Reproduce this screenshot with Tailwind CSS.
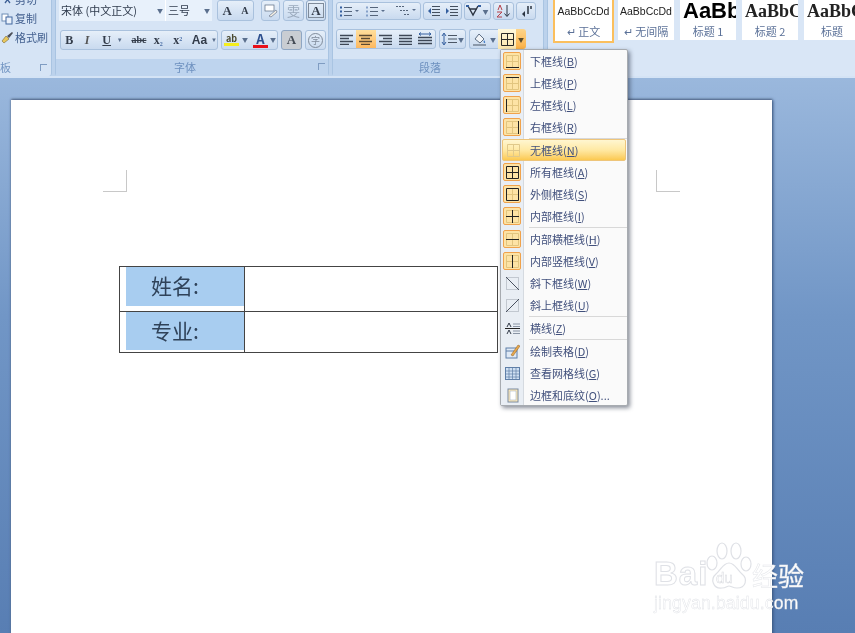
<!DOCTYPE html>
<html lang="zh-CN">
<head>
    <meta charset="UTF-8">
    <title>Word 边框菜单</title>
    <script src="https://cdn.jsdelivr.net/npm/@tailwindcss/browser@4"></script>
</head>
<body class="m-0 overflow-hidden bg-[#5f84b8]">
<div class="relative w-[855px] h-[633px] overflow-hidden flex flex-col bg-linear-to-b from-[#a8c3e4] via-[#7196c6] to-[#587eb3] font-['Noto_Sans_CJK_SC','Liberation_Sans',sans-serif] blur-[0.35px]">

    <!-- Ribbon -->
    <div class="h-[78px] shrink-0 flex gap-[3px] bg-[#bcd2ec] border-b-2 border-[#d4e3f5] overflow-hidden">

        <!-- Clipboard -->
        <div class="w-[52px] h-[76px] shrink-0 flex flex-col bg-[#d6e4f5] border-r border-[#a9c4e2] rounded-br-[3px]">
            <div class="h-[59px] flex flex-col text-[11px] leading-[19px] text-[#43608f]">
                <div class="flex items-center gap-[2px] -mt-[10px] h-[19px] pl-[2px]">
                    <svg class="w-[11px] h-[11px]" viewBox="0 0 11 11"><path d="M2 1l6 8M9 1L3 9" stroke="#3d5f95" stroke-width="1.3" fill="none"/></svg>
                    <span>剪切</span>
                </div>
                <div class="flex items-center gap-[1px] h-[19px] pl-[1px]">
                    <svg class="w-[13px] h-[13px]" viewBox="0 0 13 13"><rect x="1" y="2" width="6" height="7" fill="#fff" stroke="#6f8db5"/><rect x="5" y="5" width="6" height="7" fill="#eaf1fa" stroke="#41679f"/></svg>
                    <span>复制</span>
                </div>
                <div class="flex items-center gap-[1px] h-[19px] pl-[1px]">
                    <svg class="w-[13px] h-[13px]" viewBox="0 0 13 13"><path d="M1 10l4-5 3 3-5 4z" fill="#e9c75c" stroke="#7b6a35" stroke-width=".6"/><path d="M6 5l5-4 1 1-4 5z" fill="#4c4f57"/></svg>
                    <span>格式刷</span>
                </div>
            </div>
            <div class="flex-1 flex items-center justify-between pr-[4px] text-[11px] text-[#7295c2]">
                <span>板</span>
                <span class="w-[7px] h-[7px] border-t border-l border-[#7f9cc2]"></span>
            </div>
        </div>

        <!-- Font -->
        <div class="w-[274px] h-[76px] shrink-0 flex flex-col bg-[#d6e4f5] border-x border-[#a9c4e2] rounded-b-[3px]">
            <div class="h-[59px] pl-[3px]">
                <div class="flex h-[21px] items-stretch">
                    <div class="w-[107px] flex items-center justify-between px-[2px] bg-[#e8f1fb] border-r border-white text-[#2f3b4d] text-[11px]">
                        <span>宋体 (中文正文)</span><span class="text-[6px] text-[#5a6f8d]">▼</span>
                    </div>
                    <div class="w-[46px] flex items-center justify-between px-[2px] bg-[#e8f1fb] text-[#2f3b4d] text-[11px]">
                        <span>三号</span><span class="text-[6px] text-[#5a6f8d]">▼</span>
                    </div>
                    <div class="ml-[5px] w-[37px] flex items-center justify-around rounded-[3px] border border-[#a9c1dd] bg-linear-to-b from-[#e6eff9] to-[#c9daef] font-['Liberation_Serif',serif] font-bold text-[#333c4a] leading-none">
                        <span class="text-[13px]">A</span><span class="text-[10px]">A</span>
                    </div>
                    <div class="ml-[7px] w-[19px] flex items-center justify-center rounded-[3px] border border-[#a9c1dd] bg-linear-to-b from-[#e6eff9] to-[#c9daef]">
                        <svg class="w-[14px] h-[14px]" viewBox="0 0 14 14"><rect x="1" y="1" width="9" height="6" fill="#fff" stroke="#5a6a80" stroke-width=".7"/><path d="M5 12l7-6 1 2-6 5z" fill="#f5f0e4" stroke="#6b7a90" stroke-width=".7"/></svg>
                    </div>
                    <div class="ml-[3px] w-[21px] flex items-center justify-center rounded-[3px] border border-[#a9c1dd] bg-linear-to-b from-[#e6eff9] to-[#c9daef] text-[13px] leading-none text-[#9aa9bc]">雯</div>
                    <div class="ml-[2px] w-[20px] flex items-center justify-center rounded-[3px] border border-[#8ea6c3] bg-linear-to-b from-[#e6eff9] to-[#c9daef] font-['Liberation_Serif',serif] font-bold text-[13px] leading-none text-[#333c4a]">
                        <span class="border border-[#7f8b9a] px-[2px]">A</span>
                    </div>
                </div>
                <div class="flex h-[20px] mt-[9px] items-stretch">
                    <div class="w-[158px] ml-[1px] flex items-center rounded-[3px] border border-[#a9c1dd] bg-linear-to-b from-[#e6eff9] to-[#c9daef] font-['Liberation_Serif',serif] text-[#333c4a] leading-none">
                        <span class="w-[17px] text-center text-[12px] font-bold">B</span>
                        <span class="w-[20px] text-center text-[12px] italic font-bold text-[#555]">I</span>
                        <span class="w-[21px] text-center text-[12px] font-bold underline">U</span>
                        <span class="w-[13px] text-[6px] text-[#5a6f8d]">▼</span>
                        <span class="w-[20px] text-center text-[10px] font-bold line-through">abc</span>
                        <span class="w-[20px] text-center text-[12px] font-bold">x<sub class="text-[6px] text-[#4a6ea5]">2</sub></span>
                        <span class="w-[21px] text-center text-[12px] font-bold">x<sup class="text-[6px] text-[#4a6ea5]">2</sup></span>
                        <span class="w-[24px] text-center text-[12px] font-bold font-['Liberation_Sans',sans-serif]">Aa</span>
                        <span class="text-[6px] text-[#5a6f8d]">▼</span>
                    </div>
                    <div class="ml-[3px] w-[57px] flex items-center rounded-[3px] border border-[#a9c1dd] bg-linear-to-b from-[#e6eff9] to-[#c9daef] leading-none">
                        <span class="ml-[2px] w-[15px] flex flex-col items-center text-[9px] font-bold text-[#4a4a30] border-b-[3px] border-[#f5ee1e]">ab</span>
                        <span class="ml-[3px] w-[9px] text-[6px] text-[#5a6f8d]">▼</span>
                        <span class="ml-[2px] w-[15px] flex justify-center text-[13px] font-bold text-[#2d4f8e] border-b-[3px] border-[#e8101a]">A</span>
                        <span class="ml-[2px] text-[6px] text-[#5a6f8d]">▼</span>
                    </div>
                    <div class="ml-[3px] w-[21px] flex items-center justify-center rounded-[3px] border border-[#8ea6c3] bg-[#c9cdd2] font-['Liberation_Serif',serif] font-bold text-[13px] text-[#444b55]">A</div>
                    <div class="ml-[3px] w-[21px] flex items-center justify-center rounded-[3px] border border-[#a9c1dd] bg-linear-to-b from-[#e6eff9] to-[#c9daef]">
                        <span class="w-[15px] h-[15px] rounded-full border border-[#7f8b9a] text-[9px] leading-[13px] text-center text-[#7f8b9a]">字</span>
                    </div>
                </div>
            </div>
            <div class="relative flex-1 bg-[#bed4ee] text-center text-[11px] leading-[17px] text-[#6d90bf] pr-[14px]">
                字体
                <span class="absolute right-[3px] top-[4px] w-[7px] h-[7px] border-t border-l border-[#7f9cc2]"></span>
            </div>
        </div>

        <!-- Paragraph -->
        <div class="w-[212px] h-[76px] shrink-0 flex flex-col bg-[#d6e4f5] border-x border-[#a9c4e2] rounded-b-[3px]">
            <div class="h-[59px] pl-[3px] pt-[2px]">
                <div class="flex h-[18px] gap-[2px] items-stretch">
                    <div class="w-[85px] flex items-center justify-around rounded-[3px] border border-[#a9c1dd] bg-linear-to-b from-[#e6eff9] to-[#c9daef]">
                        <svg class="w-[20px] h-[11px]" viewBox="0 0 20 11"><path d="M4 1.500h8M4 5.500h8M4 9.500h8" stroke="#55657b"/><path d="M0 1.500h2M0 5.500h2M0 9.500h2" stroke="#345f9f" stroke-width="2"/><path d="M15 4h4l-2 2z" fill="#5a6f8d"/></svg>
                        <svg class="w-[20px] h-[11px]" viewBox="0 0 20 11"><path d="M4 1.500h8M4 5.500h8M4 9.500h8" stroke="#55657b"/><path d="M1 .5v2M1 4.500v2M1 8.500v2" stroke="#345f9f"/><path d="M15 4h4l-2 2z" fill="#5a6f8d"/></svg>
                        <svg class="w-[24px] h-[12px]" viewBox="0 0 24 12"><path d="M3 1.500h9M7 5.500h9M11 9.500h6" stroke="#55657b" stroke-dasharray="2 1"/><path d="M19 4h4l-2 2z" fill="#5a6f8d"/></svg>
                    </div>
                    <div class="w-[39px] flex items-center justify-around rounded-[3px] border border-[#a9c1dd] bg-linear-to-b from-[#e6eff9] to-[#c9daef]">
                        <svg class="w-[13px] h-[12px]" viewBox="0 0 13 12"><path d="M5 1.500h8M5 4.500h8M5 7.500h8M5 10.500h8" stroke="#44505f"/><path d="M4 3L1 6l3 3z" fill="#345f9f"/></svg>
                        <svg class="w-[13px] h-[12px]" viewBox="0 0 13 12"><path d="M5 1.500h8M5 4.500h8M5 7.500h8M5 10.500h8" stroke="#44505f"/><path d="M1 3l3 3-3 3z" fill="#345f9f"/></svg>
                    </div>
                    <div class="w-[27px] flex items-center justify-center gap-[1px] rounded-[3px] border border-[#a9c1dd] bg-linear-to-b from-[#e6eff9] to-[#c9daef]">
                        <svg class="w-[15px] h-[12px]" viewBox="0 0 15 12"><path d="M2 1l5 9 5-9M4 4h7" stroke="#2b3442" stroke-width="1.400" fill="none"/><path d="M0 1h3M12 1h3" stroke="#345f9f" stroke-width="2"/></svg>
                        <span class="text-[6px] text-[#5a6f8d]">▼</span>
                    </div>
                    <div class="w-[21px] flex items-center justify-center rounded-[3px] border border-[#a9c1dd] bg-linear-to-b from-[#e6eff9] to-[#c9daef]">
                        <svg class="w-[15px] h-[14px]" viewBox="0 0 15 14"><path d="M11 1v11M8.500 9.500L11 12.500l2.500-3" stroke="#2b3442" fill="none"/><path d="M2 6l2-5 2 5M1 8h5L1 13h5" stroke="#b6414a" fill="none"/></svg>
                    </div>
                    <div class="w-[20px] flex items-center justify-center rounded-[3px] border border-[#a9c1dd] bg-linear-to-b from-[#e6eff9] to-[#c9daef]">
                        <svg class="w-[11px] h-[13px]" viewBox="0 0 11 13"><path d="M7 1v8M10 1v3" stroke="#2b3442" stroke-width="1.500"/><path d="M1 9l3-3v6z" fill="#2b3442"/></svg>
                    </div>
                </div>
                <div class="flex h-[20px] mt-[9px] items-stretch">
                    <div class="w-[100px] flex items-center rounded-[3px] border border-[#a9c1dd] bg-linear-to-b from-[#e6eff9] to-[#c9daef] overflow-hidden">
                        <span class="w-[19px] flex justify-center"><svg class="w-[13px] h-[11px]" viewBox="0 0 13 11"><path d="M0 1.500h13M0 4.500h9M0 7.500h13M0 10.500h9" stroke="#3d4756" stroke-width="1.400"/></svg></span>
                        <span class="w-[20px] h-full flex items-center justify-center bg-linear-to-b from-[#ffdf9c] to-[#fdb85e]"><svg class="w-[13px] h-[11px]" viewBox="0 0 13 11"><path d="M0 1.500h13M2 4.500h9M0 7.500h13M2 10.500h9" stroke="#5b4a32" stroke-width="1.400"/></svg></span>
                        <span class="w-[20px] flex justify-center"><svg class="w-[13px] h-[11px]" viewBox="0 0 13 11"><path d="M0 1.500h13M4 4.500h9M0 7.500h13M4 10.500h9" stroke="#3d4756" stroke-width="1.400"/></svg></span>
                        <span class="w-[20px] flex justify-center"><svg class="w-[13px] h-[11px]" viewBox="0 0 13 11"><path d="M0 1.500h13M0 4.500h13M0 7.500h13M0 10.500h13" stroke="#3d4756" stroke-width="1.400"/></svg></span>
                        <span class="w-[20px] flex justify-center"><svg class="w-[14px] h-[14px]" viewBox="0 0 14 14"><path d="M0 5.500h14M0 8.500h14M0 11.500h14" stroke="#3d4756" stroke-width="1.400"/><path d="M1 2h12M1 2l2-1.500M1 2l2 1.500M13 2l-2-1.500M13 2l-2 1.500" stroke="#345f9f" fill="none"/></svg></span>
                    </div>
                    <div class="ml-[3px] w-[27px] flex items-center justify-center gap-[1px] rounded-[3px] border border-[#a9c1dd] bg-linear-to-b from-[#e6eff9] to-[#c9daef]">
                        <svg class="w-[16px] h-[14px]" viewBox="0 0 16 14"><path d="M3 2v10M1 4l2-3 2 3M1 10l2 3 2-3" stroke="#345f9f" fill="none"/><path d="M7 3.500h9M7 7h9M7 10.500h9" stroke="#4b5665"/></svg>
                        <span class="text-[6px] text-[#5a6f8d]">▼</span>
                    </div>
                    <div class="ml-[3px] w-[29px] flex items-center justify-center gap-[3px] rounded-l-[3px] border border-r-0 border-[#a9c1dd] bg-linear-to-b from-[#e6eff9] to-[#c9daef]">
                        <svg class="w-[15px] h-[15px]" viewBox="0 0 15 15"><path d="M3 7l4-5 5 5-4 4z" fill="#f1f4f8" stroke="#5f6f85"/><path d="M12 8c1 1.500 1.500 2 1 3-1 .5-2-1-1-3z" fill="#3d78c4"/><path d="M1 13h13" stroke="#8b99aa" stroke-width="2"/></svg>
                        <span class="text-[6px] text-[#5a6f8d]">▼</span>
                    </div>
                    <div class="w-[18px] flex items-center justify-center bg-linear-to-b from-[#fff8dc] to-[#fbe6ad]">
                        <svg class="w-[13px] h-[13px]" viewBox="0 0 13 13"><path d="M.5.500h12v12H.5zM6.500.500v12M.5 6.500h12" stroke="#2b2b2b" fill="none"/></svg>
                    </div>
                    <div class="w-[10px] flex items-center justify-center bg-linear-to-b from-[#fdd489] to-[#fbb042] rounded-r-[3px] text-[6px] text-[#5a4a2a]">▼</div>
                </div>
            </div>
            <div class="flex-1 bg-[#bed4ee] text-center text-[11px] leading-[17px] text-[#6d90bf] pr-[16px]">段落</div>
        </div>

        <!-- Styles -->
        <div class="flex-1 h-[76px] flex items-start gap-[4px] pl-[5px] bg-[#d9e6f6] border-l border-[#a9c4e2] text-[11px] text-[#5b7198]">
            <div class="w-[61px] h-[43px] shrink-0 flex flex-col items-center bg-white border-2 border-t-0 border-[#fbbf5d]">
                <span class="h-[22px] leading-[22px] text-[10.500px] font-['Liberation_Sans',sans-serif] text-[#222]">AaBbCcDd</span>
                <span class="leading-[19px]">↵ 正文</span>
            </div>
            <div class="w-[56px] h-[40px] shrink-0 flex flex-col items-center bg-white">
                <span class="h-[22px] leading-[22px] text-[10.500px] font-['Liberation_Sans',sans-serif] text-[#222]">AaBbCcDd</span>
                <span class="leading-[19px]">↵ 无间隔</span>
            </div>
            <div class="ml-[2px] w-[56px] h-[40px] shrink-0 flex flex-col items-center bg-white overflow-hidden">
                <span class="self-start ml-[3px] h-[22px] leading-[22px] font-['Liberation_Sans',sans-serif] font-bold text-[22px] text-black whitespace-nowrap">AaBb</span>
                <span class="leading-[19px]">标题 1</span>
            </div>
            <div class="ml-[2px] w-[56px] h-[40px] shrink-0 flex flex-col items-center bg-white overflow-hidden">
                <span class="self-start ml-[3px] h-[22px] leading-[22px] font-['Liberation_Serif',serif] font-bold text-[18px] text-[#222] whitespace-nowrap">AaBbC</span>
                <span class="leading-[19px]">标题 2</span>
            </div>
            <div class="ml-[2px] w-[56px] h-[40px] shrink-0 flex flex-col items-center bg-white overflow-hidden">
                <span class="self-start ml-[3px] h-[22px] leading-[22px] font-['Liberation_Serif',serif] font-bold text-[18px] text-[#222] whitespace-nowrap">AaBbC</span>
                <span class="leading-[19px]">标题</span>
            </div>
        </div>
    </div>

    <!-- Document area -->
    <div class="flex-1 pt-[22px] pl-[11px]">
        <div class="w-[761px] h-[560px] bg-white shadow-[1px_0_3px_#33507c,0_-1px_2px_#6f7f96] pt-[70px]">
            <!-- Crop marks -->
            <div class="flex justify-between pl-[92px] pr-[92px]">
                <span class="w-[24px] h-[22px] border-r border-b border-[#c8c8c8]"></span>
                <span class="w-[24px] h-[22px] border-l border-b border-[#c8c8c8]"></span>
            </div>
            <!-- Table -->
            <div class="ml-[108px] mt-[74px] w-[379px] border border-[#444] text-[21px] leading-none text-[#2f4259]">
                <div class="flex h-[45px] border-b border-[#444]">
                    <div class="w-[125px] border-r border-[#444] pl-[6px]">
                        <div class="h-[39px] bg-[#a8cdf0] pl-[25px] pt-[8px]">姓名:</div>
                    </div>
                    <div class="flex-1"></div>
                </div>
                <div class="flex h-[40px]">
                    <div class="w-[125px] border-r border-[#444] pl-[6px]">
                        <div class="h-[38px] bg-[#a8cdf0] pl-[25px] pt-[8px]">专业:</div>
                    </div>
                    <div class="flex-1"></div>
                </div>
            </div>
        </div>
    </div>

    <!-- Borders dropdown -->
    <div class="absolute left-[500px] top-[49px] w-[128px] h-[357px] bg-[#fafafa] border border-[#a7abb0] rounded-[2px] shadow-[2px_2px_4px_rgba(40,50,70,0.55)] text-[11px] leading-[22px] text-[#41507c]">
        <div class="absolute left-0 top-0 bottom-0 w-[23px] bg-[#e9eef4] border-r border-[#d5dae0]"></div>
        <div class="relative flex flex-col">
            <div class="flex h-[22px] items-center"><span class="w-[22px] flex justify-center"><span class="w-[18px] h-[18px] flex items-center justify-center rounded-[2px] border border-[#f0a24b] bg-[#fde3a5]"><svg class="w-[13px] h-[13px]" viewBox="0 0 13 13"><path d="M.5.500h12v12H.5zM6.500.500v12M.5 6.500h12" stroke="#e2c57f" fill="none"/><path d="M0 12.500h13" stroke="#222"/></svg></span></span><span class="pl-[7px]">下框线(<u>B</u>)</span></div>
            <div class="flex h-[22px] items-center"><span class="w-[22px] flex justify-center"><span class="w-[18px] h-[18px] flex items-center justify-center rounded-[2px] border border-[#f0a24b] bg-[#fde3a5]"><svg class="w-[13px] h-[13px]" viewBox="0 0 13 13"><path d="M.5.500h12v12H.5zM6.500.500v12M.5 6.500h12" stroke="#e2c57f" fill="none"/><path d="M0 .5h13" stroke="#222"/></svg></span></span><span class="pl-[7px]">上框线(<u>P</u>)</span></div>
            <div class="flex h-[22px] items-center"><span class="w-[22px] flex justify-center"><span class="w-[18px] h-[18px] flex items-center justify-center rounded-[2px] border border-[#f0a24b] bg-[#fde3a5]"><svg class="w-[13px] h-[13px]" viewBox="0 0 13 13"><path d="M.5.500h12v12H.5zM6.500.500v12M.5 6.500h12" stroke="#e2c57f" fill="none"/><path d="M.5 0v13" stroke="#222"/></svg></span></span><span class="pl-[7px]">左框线(<u>L</u>)</span></div>
            <div class="flex h-[22px] items-center"><span class="w-[22px] flex justify-center"><span class="w-[18px] h-[18px] flex items-center justify-center rounded-[2px] border border-[#f0a24b] bg-[#fde3a5]"><svg class="w-[13px] h-[13px]" viewBox="0 0 13 13"><path d="M.5.500h12v12H.5zM6.500.500v12M.5 6.500h12" stroke="#e2c57f" fill="none"/><path d="M12.500 0v13" stroke="#222"/></svg></span></span><span class="pl-[7px]">右框线(<u>R</u>)</span></div>
            <div class="ml-[28px] h-px bg-[#d8d8d8]"></div>
            <div class="mx-px flex h-[22px] items-center rounded-[2px] border border-[#eec57a] bg-linear-to-b from-[#fff6d0] via-[#ffe9a3] to-[#fbc94f]"><span class="w-[20px] flex justify-center"><svg class="w-[13px] h-[13px]" viewBox="0 0 13 13"><path d="M.5.500h12v12H.5zM6.500.500v12M.5 6.500h12" stroke="#e0c98a" fill="none"/></svg></span><span class="pl-[7px]">无框线(<u>N</u>)</span></div>
            <div class="flex h-[22px] items-center"><span class="w-[22px] flex justify-center"><span class="w-[18px] h-[18px] flex items-center justify-center rounded-[2px] border border-[#f0a24b] bg-[#fde3a5]"><svg class="w-[13px] h-[13px]" viewBox="0 0 13 13"><path d="M.5.500h12v12H.5zM6.500.500v12M.5 6.500h12" stroke="#222" fill="none"/></svg></span></span><span class="pl-[7px]">所有框线(<u>A</u>)</span></div>
            <div class="flex h-[22px] items-center"><span class="w-[22px] flex justify-center"><span class="w-[18px] h-[18px] flex items-center justify-center rounded-[2px] border border-[#f0a24b] bg-[#fde3a5]"><svg class="w-[13px] h-[13px]" viewBox="0 0 13 13"><path d="M6.500.500v12M.5 6.500h12" stroke="#e2c57f" fill="none"/><path d="M.5.500h12v12H.5z" stroke="#222" fill="none"/></svg></span></span><span class="pl-[7px]">外侧框线(<u>S</u>)</span></div>
            <div class="flex h-[22px] items-center"><span class="w-[22px] flex justify-center"><span class="w-[18px] h-[18px] flex items-center justify-center rounded-[2px] border border-[#f0a24b] bg-[#fde3a5]"><svg class="w-[13px] h-[13px]" viewBox="0 0 13 13"><path d="M.5.500h12v12H.5z" stroke="#e2c57f" fill="none"/><path d="M6.500 0v13M0 6.500h13" stroke="#222"/></svg></span></span><span class="pl-[7px]">内部框线(<u>I</u>)</span></div>
            <div class="ml-[28px] h-px bg-[#d8d8d8]"></div>
            <div class="flex h-[22px] items-center"><span class="w-[22px] flex justify-center"><span class="w-[18px] h-[18px] flex items-center justify-center rounded-[2px] border border-[#f0a24b] bg-[#fde3a5]"><svg class="w-[13px] h-[13px]" viewBox="0 0 13 13"><path d="M.5.500h12v12H.5zM6.500.500v12" stroke="#e2c57f" fill="none"/><path d="M0 6.500h13" stroke="#222"/></svg></span></span><span class="pl-[7px]">内部横框线(<u>H</u>)</span></div>
            <div class="flex h-[22px] items-center"><span class="w-[22px] flex justify-center"><span class="w-[18px] h-[18px] flex items-center justify-center rounded-[2px] border border-[#f0a24b] bg-[#fde3a5]"><svg class="w-[13px] h-[13px]" viewBox="0 0 13 13"><path d="M.5.500h12v12H.5zM.5 6.500h12" stroke="#e2c57f" fill="none"/><path d="M6.500 0v13" stroke="#222"/></svg></span></span><span class="pl-[7px]">内部竖框线(<u>V</u>)</span></div>
            <div class="flex h-[22px] items-center"><span class="w-[22px] flex justify-center"><svg class="w-[13px] h-[13px]" viewBox="0 0 13 13"><path d="M.5.500h12v12H.5z" stroke="#9aa3ad" stroke-dasharray="1 1" fill="none"/><path d="M0 0l13 13" stroke="#4a5260"/></svg></span><span class="pl-[7px]">斜下框线(<u>W</u>)</span></div>
            <div class="flex h-[22px] items-center"><span class="w-[22px] flex justify-center"><svg class="w-[13px] h-[13px]" viewBox="0 0 13 13"><path d="M.5.500h12v12H.5z" stroke="#9aa3ad" stroke-dasharray="1 1" fill="none"/><path d="M0 13L13 0" stroke="#4a5260"/></svg></span><span class="pl-[7px]">斜上框线(<u>U</u>)</span></div>
            <div class="ml-[28px] h-px bg-[#d8d8d8]"></div>
            <div class="flex h-[22px] items-center"><span class="w-[22px] flex justify-center"><svg class="w-[15px] h-[13px]" viewBox="0 0 15 13"><path d="M2 5l2-4 2 4M2 12l2-4 2 4" stroke="#333b48" fill="none"/><path d="M8 2h7M8 4.500h7M8 9h7M8 11.500h7" stroke="#8a95a5"/><path d="M0 6.500h15" stroke="#222"/></svg></span><span class="pl-[7px]">横线(<u>Z</u>)</span></div>
            <div class="ml-[28px] h-px bg-[#d8d8d8]"></div>
            <div class="flex h-[22px] items-center"><span class="w-[22px] flex justify-center"><svg class="w-[15px] h-[15px]" viewBox="0 0 15 15"><rect x="1" y="4" width="11" height="10" fill="#dfe9f5" stroke="#5f7fa8"/><path d="M1 7h11" stroke="#5f7fa8"/><path d="M6 11l7-10 2 1-7 10z" fill="#e9a84c" stroke="#8a5f25" stroke-width=".5"/></svg></span><span class="pl-[7px]">绘制表格(<u>D</u>)</span></div>
            <div class="flex h-[22px] items-center"><span class="w-[22px] flex justify-center"><svg class="w-[15px] h-[13px]" viewBox="0 0 15 13"><rect x=".5" y=".5" width="14" height="12" fill="#cfe0f3" stroke="#5f7fa8"/><path d="M.5 4h14M.5 7h14M.5 10h14M4 .5v12M7.500 .5v12M11 .5v12" stroke="#5f7fa8" stroke-width=".7"/></svg></span><span class="pl-[7px]">查看网格线(<u>G</u>)</span></div>
            <div class="flex h-[22px] items-center"><span class="w-[22px] flex justify-center"><svg class="w-[13px] h-[15px]" viewBox="0 0 13 15"><rect x="2" y="1" width="10" height="13" fill="#fde9b8" stroke="#7a8aa0"/><rect x="4" y="3" width="6" height="9" fill="#fff" stroke="#a8b4c4" stroke-width=".6"/></svg></span><span class="pl-[7px]">边框和底纹(<u>O</u>)...</span></div>
        </div>
    </div>

    <!-- Watermark -->
    <div class="absolute left-[654px] top-[539px] w-[160px] h-[75px] text-white leading-none [-webkit-text-stroke:1px_#dfe1e6]">
        <div class="flex items-end h-[52px]">
            <span class="w-[51px] shrink-0 font-['Liberation_Sans',sans-serif] font-bold text-[33px] leading-[35px] tracking-[1px]">Bai</span>
            <span class="relative w-[47px] h-[50px] shrink-0">
                <svg class="absolute left-0 top-0 w-[47px] h-[50px]" viewBox="0 0 47 50"><g fill="none" stroke="#dfe1e6" stroke-width="1.200"><ellipse cx="7" cy="22" rx="5" ry="7"/><ellipse cx="17" cy="10" rx="5" ry="8"/><ellipse cx="31" cy="10" rx="5" ry="8"/><ellipse cx="41" cy="23" rx="5" ry="7"/><path d="M24 22c-6 0-8 7-13 11-6 5-3 15 6 14 4 0 5-2 7-2s4 2 8 2c9 0 11-9 5-14-5-4-7-11-13-11z"/></g></svg>
                <span class="absolute left-[11px] top-[29px] text-[15px] font-['Liberation_Sans',sans-serif] [-webkit-text-stroke:0.5px_#d8dadf]">du</span>
            </span>
            <span class="text-[26px] leading-[32px] [-webkit-text-stroke:0.5px_#e4e6ea]">经验</span>
        </div>
        <div class="mt-[2px] font-['Liberation_Sans',sans-serif] text-[17.500px] leading-[20px] tracking-[0.2px] [-webkit-text-stroke:0.4px_#dfe1e6]">jingyan.baidu.com</div>
    </div>
</div>
</body>
</html>
